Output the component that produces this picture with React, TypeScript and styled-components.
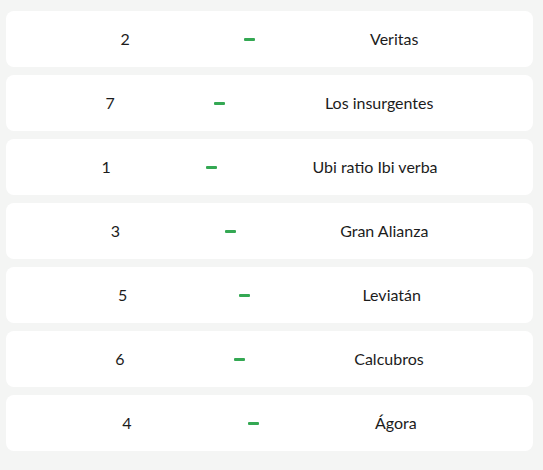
import React from 'react';
import styled, { createGlobalStyle } from 'styled-components';

interface Entry {
  votes: number;
  name: string;
}

const entries: Entry[] = [
  { votes: 2, name: 'Veritas' },
  { votes: 7, name: 'Los insurgentes' },
  { votes: 1, name: 'Ubi ratio Ibi verba' },
  { votes: 3, name: 'Gran Alianza' },
  { votes: 5, name: 'Leviatán' },
  { votes: 6, name: 'Calcubros' },
  { votes: 4, name: 'Ágora' },
];

const App: React.FC = () => {
  return (
    <>
      <GlobalStyle />
      <List>
        {entries.map((entry) => (
          <Row key={entry.name}>
            <Count>{entry.votes}</Count>
            <Dash />
            <Name>{entry.name}</Name>
          </Row>
        ))}
      </List>
    </>
  );
};

const GlobalStyle = createGlobalStyle`
  html, body {
    margin: 0;
    background-color: #f4f5f4;
  }

  body {
    min-height: 470px;
    font-family: Lato, 'Noto Sans', sans-serif;
    color: #1c1c1c;
  }
`;

const List = styled.div`
  display: flex;
  flex-direction: column;
  gap: 8px;

  padding: 11px 10px 0 6px;
`;

const Row = styled.div`
  display: flex;
  height: 56px;

  align-items: center;
  justify-content: space-evenly;

  background-color: #ffffff;
  border-radius: 8px;
`;

const Count = styled.span`
  font-size: 16px;
  line-height: 20px;
`;

const Dash = styled.span`
  display: block;
  width: 11px;
  height: 3px;

  background-color: #34a853;
  border-radius: 1px;
`;

const Name = styled.span`
  font-size: 16px;
  line-height: 20px;
`;

export default App;
